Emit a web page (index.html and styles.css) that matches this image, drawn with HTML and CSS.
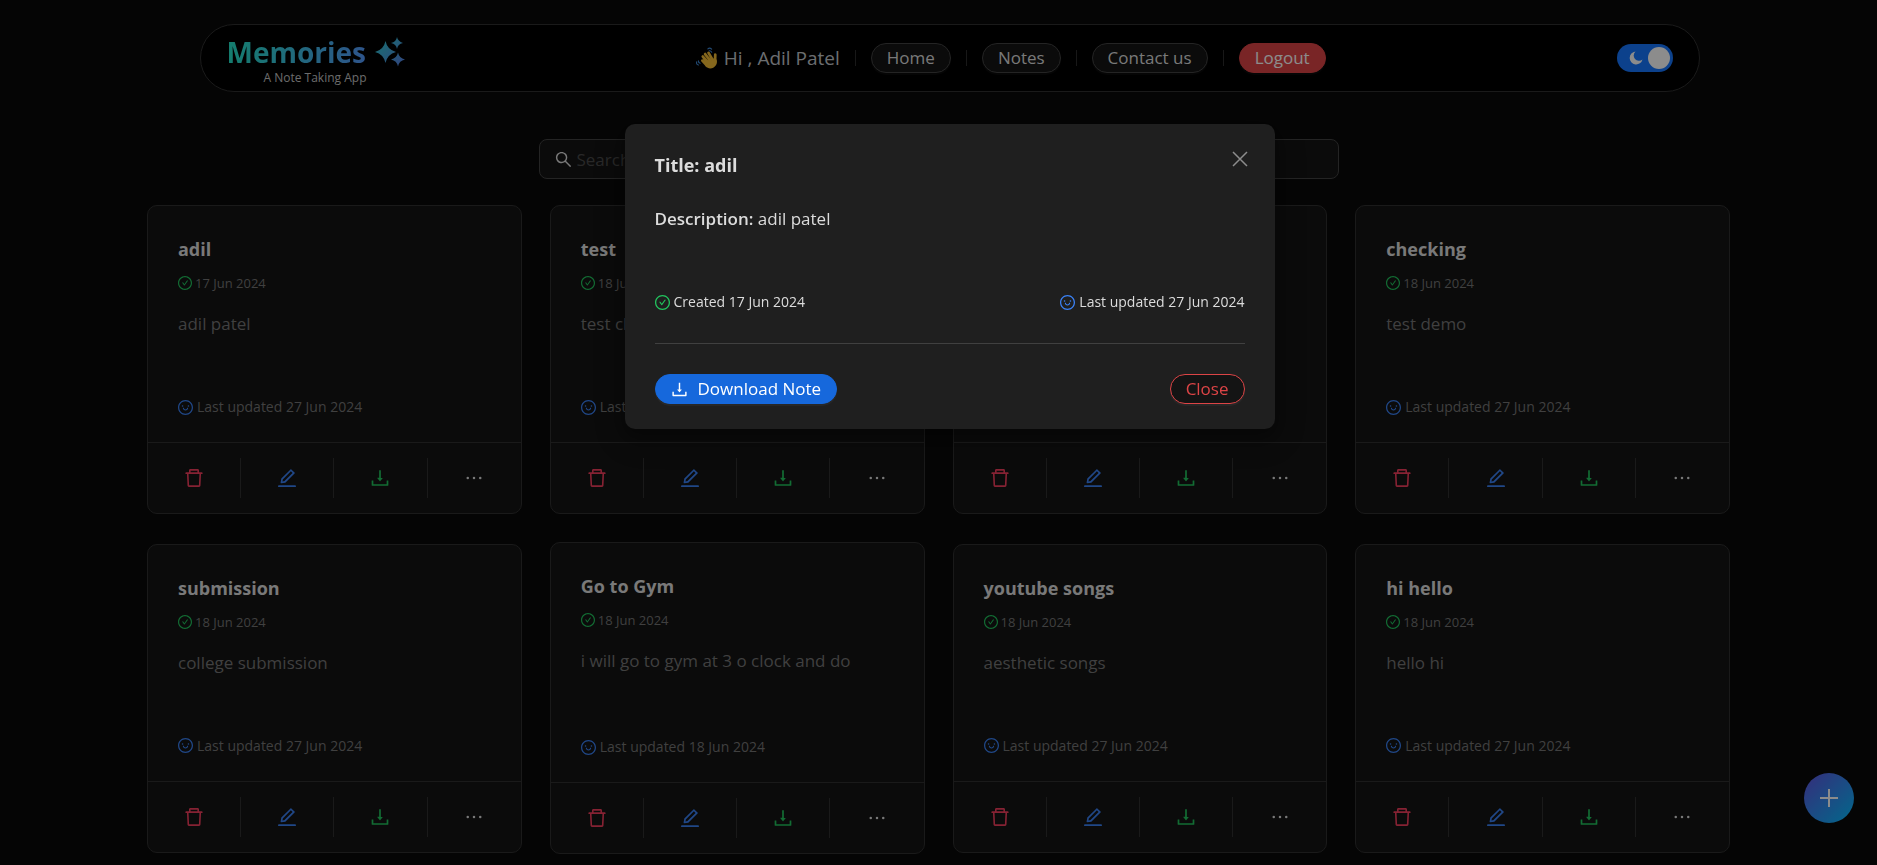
FILE: index.html
```html
<!DOCTYPE html>
<html lang="en">
<head>
<meta charset="utf-8">
<meta name="viewport" content="width=device-width, initial-scale=1">
<title>Memories</title>
<link rel="stylesheet" href="styles.css">
</head>
<body>
<svg class="sprite" aria-hidden="true">
  <defs>
    <linearGradient id="brand" x1="0" y1="0" x2="1" y2="1"><stop offset="0" stop-color="#2bd0cc"/><stop offset="1" stop-color="#5a7be8"/></linearGradient>
  </defs>
  <symbol id="trash" viewBox="64 64 896 896"><path d="M360 184h-8c4.4 0 8-3.6 8-8v8h304v-8c0 4.4 3.6 8 8 8h-8v72h72v-80c0-35.300-28.700-64-64-64H352c-35.300 0-64 28.700-64 64v80h72v-72zm504 72H160c-17.700 0-32 14.300-32 32v32c0 4.400 3.600 8 8 8h60.400l24.700 523c1.600 34.100 29.800 61 63.900 61h454c34.200 0 62.300-26.800 63.900-61l24.700-523H888c4.400 0 8-3.600 8-8v-32c0-17.700-14.300-32-32-32zM731.300 840H292.700l-24.200-512h487l-24.200 512z"/></symbol>
  <symbol id="edit" viewBox="64 64 896 896"><path d="M257.700 752c2 0 4-.2 6-.5L431.900 722c2-.4 3.900-1.300 5.300-2.800l423.900-423.900a9.960 9.960 0 000-14.100L694.900 114.900c-1.900-1.900-4.400-2.900-7.100-2.900s-5.200 1-7.100 2.900L256.800 538.800c-1.500 1.500-2.400 3.300-2.800 5.300l-29.500 168.200a33.500 33.500 0 009.400 29.800c6.600 6.400 14.900 9.900 23.800 9.900zm67.400-174.400L687.800 215l73.300 73.300-362.700 362.600-88.900 15.700 15.600-89zM880 836H144c-17.700 0-32 14.300-32 32v36c0 4.400 3.600 8 8 8h784c4.400 0 8-3.600 8-8v-36c0-17.700-14.300-32-32-32z"/></symbol>
  <symbol id="download" viewBox="64 64 896 896"><path d="M505.700 661a8 8 0 0012.600 0l112-141.700c4.100-5.200.4-12.900-6.300-12.900h-74.100V168c0-4.400-3.600-8-8-8h-60c-4.400 0-8 3.600-8 8v338.300H400c-6.700 0-10.400 7.700-6.300 12.900l112 141.800zM878 626h-60c-4.400 0-8 3.600-8 8v154H214V634c0-4.400-3.600-8-8-8h-60c-4.400 0-8 3.600-8 8v198c0 17.700 14.300 32 32 32h684c17.700 0 32-14.300 32-32V634c0-4.400-3.600-8-8-8z"/></symbol>
  <symbol id="more" viewBox="64 64 896 896"><circle cx="232" cy="511" r="56"/><circle cx="512" cy="511" r="56"/><circle cx="792" cy="511" r="56"/></symbol>
  <symbol id="check" viewBox="64 64 896 896"><path d="M699 353h-46.900c-10.200 0-19.900 4.900-25.900 13.300L469 584.300l-71.200-98.800c-6-8.300-15.600-13.300-25.900-13.300H325c-6.500 0-10.300 7.400-6.500 12.700l124.600 172.800a31.800 31.800 0 0051.700 0l210.600-292c3.900-5.300.1-12.700-6.400-12.700z"/><path d="M512 64C264.600 64 64 264.600 64 512s200.600 448 448 448 448-200.600 448-448S759.400 64 512 64zm0 820c-205.400 0-372-166.600-372-372s166.600-372 372-372 372 166.600 372 372-166.600 372-372 372z"/></symbol>
  <symbol id="smile" viewBox="64 64 896 896"><path d="M288 421a48 48 0 1096 0 48 48 0 10-96 0zm352 0a48 48 0 1096 0 48 48 0 10-96 0zM512 64C264.600 64 64 264.600 64 512s200.600 448 448 448 448-200.600 448-448S759.400 64 512 64zm0 820c-205.400 0-372-166.600-372-372s166.600-372 372-372 372 166.600 372 372-166.600 372-372 372zM664 533h-48.100c-4.200 0-7.800 3.200-8.100 7.400C604 589.900 562.500 629 512 629s-92.100-39.100-95.800-88.600c-.3-4.200-3.900-7.400-8.100-7.400H360a8 8 0 00-8 8.400c4.400 84.300 74.500 151.600 160 151.600s155.600-67.300 160-151.600a8 8 0 00-8-8.400z"/></symbol>
  <symbol id="search" viewBox="64 64 896 896"><path d="M909.600 854.500L649.900 594.800C690.200 542.700 712 479 712 412c0-80.200-31.300-155.400-87.900-212.100-56.600-56.700-132-87.900-212.100-87.900s-155.500 31.300-212.100 87.900C143.200 256.500 112 331.800 112 412c0 80.100 31.300 155.500 87.900 212.100C256.500 680.800 331.800 712 412 712c67 0 130.600-21.800 182.700-62l259.700 259.600a8.200 8.200 0 0011.600 0l43.600-43.500a8.200 8.200 0 000-11.600zM570.400 570.400C528 612.700 471.800 636 412 636s-116-23.300-158.400-65.600C211.300 528 188 471.800 188 412s23.300-116.100 65.600-158.400C296 211.300 352.200 188 412 188s116.100 23.200 158.400 65.600S636 352.200 636 412s-23.300 116.100-65.600 158.400z"/></symbol>
</svg>

<header class="topbar">
  <a class="brand" href="#">
    <span class="brand-row">
      <span class="brand-name">Memories</span>
      <svg class="brand-icon" viewBox="0 0 30 30" aria-hidden="true"><path fill="url(#brand)" d="M10.500 4Q12.300 12.700 21 15Q12.300 17.300 10.500 26Q8.700 17.300 0 15Q8.700 12.700 10.500 4ZM22 0Q22.800 4.200 28 6Q22.800 7.200 22 12Q21.200 7.200 16 6Q21.200 4.800 22 0ZM23 15.500Q24.200 21.300 30 22.500Q24.200 23.700 23 29.500Q21.800 23.700 16 22.500Q21.800 21.300 23 15.500Z"/></svg>
    </span>
    <span class="brand-sub">A Note Taking App</span>
  </a>
  <nav class="menu">
    <span class="greeting">
      <svg class="wave" viewBox="0 0 20 20" aria-hidden="true">
        <g fill="#f2bc35"><path d="M5.500 8.500l4 4 7-2 2.200.9c1 3-.2 5.700-2.600 7.200-2.700 1.700-5.600 1-7.400-1z"/></g>
        <g stroke="#f2bc35" stroke-width="2.500" stroke-linecap="round" fill="none"><path d="M9.500 16.500L5.800 12.400M11.500 14.500L6.200 8.700M13 12.500L8.300 6.400M15 11.500L11.400 5.300M17.300 13.500L17.500 7"/></g>
        <g stroke="#3f8ad8" stroke-width="1" stroke-linecap="round" fill="none"><path d="M10.800 1.800q1.600-1.600 3.400.2M12 3.400q1.500-.2 2.300 1.300M.6 13.500q-.5 2.600 1.700 2.800M2.200 12.500q-.2 1.800 1.600 2.200"/></g>
      </svg>
      Hi , Adil Patel
    </span>
    <i class="bar"></i>
    <a class="pill" href="#">Home</a>
    <i class="bar"></i>
    <a class="pill" href="#">Notes</a>
    <i class="bar"></i>
    <a class="pill" href="#">Contact us</a>
    <i class="bar"></i>
    <button class="pill pill-danger" type="button">Logout</button>
  </nav>
  <label class="switch">
    <input class="switch-input" type="checkbox" role="switch" aria-label="Dark mode" checked>
    <svg class="moon" viewBox="0 0 14 14" aria-hidden="true"><path fill="#fff" d="M6.500.5a6.500 6.500 0 1 0 7 8A5 5 0 0 1 6.500.5z"/></svg>
    <span class="knob"></span>
  </label>
</header>

<main class="page">
  <label class="search">
    <svg class="search-icon" aria-hidden="true"><use href="#search"/></svg>
    <input class="search-input" type="text" placeholder="Search" aria-label="Search notes">
  </label>

  <div class="grid">
    <article class="card">
      <div class="card-body">
        <h2 class="card-title">adil</h2>
        <p class="created"><svg><use href="#check"/></svg>17 Jun 2024</p>
        <p class="text">adil patel</p>
        <p class="updated"><svg><use href="#smile"/></svg>Last updated 27 Jun 2024</p>
      </div>
      <div class="actions">
        <button class="act red" aria-label="Delete"><svg><use href="#trash"/></svg></button>
        <button class="act blue" aria-label="Edit"><svg><use href="#edit"/></svg></button>
        <button class="act green" aria-label="Download"><svg><use href="#download"/></svg></button>
        <button class="act" aria-label="More"><svg><use href="#more"/></svg></button>
      </div>
    </article>
    <article class="card">
      <div class="card-body">
        <h2 class="card-title">test</h2>
        <p class="created"><svg><use href="#check"/></svg>18 Jun 2024</p>
        <p class="text">test checking</p>
        <p class="updated"><svg><use href="#smile"/></svg>Last updated 27 Jun 2024</p>
      </div>
      <div class="actions">
        <button class="act red" aria-label="Delete"><svg><use href="#trash"/></svg></button>
        <button class="act blue" aria-label="Edit"><svg><use href="#edit"/></svg></button>
        <button class="act green" aria-label="Download"><svg><use href="#download"/></svg></button>
        <button class="act" aria-label="More"><svg><use href="#more"/></svg></button>
      </div>
    </article>
    <article class="card">
      <div class="card-body">
        <h2 class="card-title">demo</h2>
        <p class="created"><svg><use href="#check"/></svg>18 Jun 2024</p>
        <p class="text">demo</p>
        <p class="updated"><svg><use href="#smile"/></svg>Last updated 27 Jun 2024</p>
      </div>
      <div class="actions">
        <button class="act red" aria-label="Delete"><svg><use href="#trash"/></svg></button>
        <button class="act blue" aria-label="Edit"><svg><use href="#edit"/></svg></button>
        <button class="act green" aria-label="Download"><svg><use href="#download"/></svg></button>
        <button class="act" aria-label="More"><svg><use href="#more"/></svg></button>
      </div>
    </article>
    <article class="card">
      <div class="card-body">
        <h2 class="card-title">checking</h2>
        <p class="created"><svg><use href="#check"/></svg>18 Jun 2024</p>
        <p class="text">test demo</p>
        <p class="updated"><svg><use href="#smile"/></svg>Last updated 27 Jun 2024</p>
      </div>
      <div class="actions">
        <button class="act red" aria-label="Delete"><svg><use href="#trash"/></svg></button>
        <button class="act blue" aria-label="Edit"><svg><use href="#edit"/></svg></button>
        <button class="act green" aria-label="Download"><svg><use href="#download"/></svg></button>
        <button class="act" aria-label="More"><svg><use href="#more"/></svg></button>
      </div>
    </article>
    <article class="card">
      <div class="card-body">
        <h2 class="card-title">submission</h2>
        <p class="created"><svg><use href="#check"/></svg>18 Jun 2024</p>
        <p class="text">college submission</p>
        <p class="updated"><svg><use href="#smile"/></svg>Last updated 27 Jun 2024</p>
      </div>
      <div class="actions">
        <button class="act red" aria-label="Delete"><svg><use href="#trash"/></svg></button>
        <button class="act blue" aria-label="Edit"><svg><use href="#edit"/></svg></button>
        <button class="act green" aria-label="Download"><svg><use href="#download"/></svg></button>
        <button class="act" aria-label="More"><svg><use href="#more"/></svg></button>
      </div>
    </article>
    <article class="card">
      <div class="card-body">
        <h2 class="card-title">Go to Gym</h2>
        <p class="created"><svg><use href="#check"/></svg>18 Jun 2024</p>
        <p class="text text-long">i will go to gym at 3 o clock and do</p>
        <p class="updated"><svg><use href="#smile"/></svg>Last updated 18 Jun 2024</p>
      </div>
      <div class="actions">
        <button class="act red" aria-label="Delete"><svg><use href="#trash"/></svg></button>
        <button class="act blue" aria-label="Edit"><svg><use href="#edit"/></svg></button>
        <button class="act green" aria-label="Download"><svg><use href="#download"/></svg></button>
        <button class="act" aria-label="More"><svg><use href="#more"/></svg></button>
      </div>
    </article>
    <article class="card">
      <div class="card-body">
        <h2 class="card-title">youtube songs</h2>
        <p class="created"><svg><use href="#check"/></svg>18 Jun 2024</p>
        <p class="text">aesthetic songs</p>
        <p class="updated"><svg><use href="#smile"/></svg>Last updated 27 Jun 2024</p>
      </div>
      <div class="actions">
        <button class="act red" aria-label="Delete"><svg><use href="#trash"/></svg></button>
        <button class="act blue" aria-label="Edit"><svg><use href="#edit"/></svg></button>
        <button class="act green" aria-label="Download"><svg><use href="#download"/></svg></button>
        <button class="act" aria-label="More"><svg><use href="#more"/></svg></button>
      </div>
    </article>
    <article class="card">
      <div class="card-body">
        <h2 class="card-title">hi hello</h2>
        <p class="created"><svg><use href="#check"/></svg>18 Jun 2024</p>
        <p class="text">hello hi</p>
        <p class="updated"><svg><use href="#smile"/></svg>Last updated 27 Jun 2024</p>
      </div>
      <div class="actions">
        <button class="act red" aria-label="Delete"><svg><use href="#trash"/></svg></button>
        <button class="act blue" aria-label="Edit"><svg><use href="#edit"/></svg></button>
        <button class="act green" aria-label="Download"><svg><use href="#download"/></svg></button>
        <button class="act" aria-label="More"><svg><use href="#more"/></svg></button>
      </div>
    </article>
  </div>
</main>

<button class="fab" type="button" aria-label="Add note">
  <svg viewBox="0 0 20 20" width="20" height="20" aria-hidden="true"><path d="M10 1v18M1 10h18" stroke="#fff" stroke-width="2"/></svg>
</button>

<div class="mask">
  <section class="modal" role="dialog" aria-modal="true" aria-labelledby="note-title">
    <div class="modal-head">
      <h2 class="modal-title" id="note-title">Title: adil</h2>
      <button class="modal-x" type="button" aria-label="Dismiss">
        <svg viewBox="0 0 16 16" width="16" height="16" aria-hidden="true"><path d="M1 1l14 14M15 1L1 15" stroke="currentColor" stroke-width="1.500"/></svg>
      </button>
    </div>
    <p class="modal-text"><strong>Description:</strong> adil patel</p>
    <div class="modal-meta">
      <span class="stamp stamp-created"><svg><use href="#check"/></svg>Created 17 Jun 2024</span>
      <span class="stamp stamp-updated"><svg><use href="#smile"/></svg>Last updated 27 Jun 2024</span>
    </div>
    <div class="modal-foot">
      <button class="pill pill-primary" type="button"><svg><use href="#download"/></svg>Download Note</button>
      <button class="pill pill-outline" type="button">Close</button>
    </div>
  </section>
</div>
</body>
</html>
```
FILE: styles.css
```css
:root {
  --text: #dcdcdc;
  --muted: #757575;
  --line: #303030;
  --surface: #141414;
  --green: #22c55e;
  --blue: #3b82f6;
  --rose: #f43f5e;
  --shift: 22px;
}

* { box-sizing: border-box; }

body {
  margin: 0;
  height: 100vh;
  overflow: hidden;
  background: #0a0a0a;
  color: var(--text);
  font-family: "Segoe UI", "Open Sans", "Noto Sans", sans-serif;
  font-size: 16px;
}

h2, p { margin: 0; }
svg { display: block; fill: currentColor; flex: none; }
.sprite { position: absolute; width: 0; height: 0; }
button { font: inherit; color: inherit; cursor: pointer; }

/* Header */
.topbar {
  display: flex;
  align-items: center;
  justify-content: space-between;
  width: 80%;
  max-width: 1500px;
  height: 68px;
  margin: 24px auto 0;
  translate: calc(var(--shift) / 2) 0;
  padding: 0 26px;
  border: 1px solid var(--line);
  border-radius: 34px;
  background: #000;
}

.brand { display: flex; flex-direction: column; padding-top: 4px; text-decoration: none; color: inherit; }
.brand-row { display: flex; align-items: center; gap: 9px; }
.brand-name {
  font-size: 28px;
  font-weight: 700;
  line-height: 36px;
  background: linear-gradient(100deg, #25e6c8, #5599ff);
  -webkit-background-clip: text;
  background-clip: text;
  color: transparent;
}
.brand-icon { width: 30px; height: 30px; }
.brand-sub { margin-left: 37px; font-size: 12px; line-height: 16px; color: #c4c4c4; }

.menu { display: flex; align-items: center; gap: 15px; }
.greeting { display: flex; align-items: center; gap: 6px; font-size: 19px; color: #c4c8cc; }
.wave { width: 22px; height: 22px; }
.bar { width: 1px; height: 16px; background: #2c2c2c; }

.pill {
  display: inline-flex;
  align-items: center;
  height: 30px;
  padding: 0 15px;
  border: 1px solid #424242;
  border-radius: 15px;
  background: var(--surface);
  color: var(--text);
  font-size: 17px;
  line-height: 22px;
  text-decoration: none;
  box-shadow: 0 2px 0 rgba(255, 255, 255, 0.04);
}
.pill-danger { border-color: #dc4446; background: #dc4446; color: #fff; }

.switch {
  position: relative;
  display: flex;
  align-items: center;
  justify-content: space-between;
  width: 56px;
  height: 28px;
  padding: 0 3px 0 12px;
  border-radius: 14px;
  background: #1677ff;
}
.switch-input { position: absolute; inset: 0; margin: 0; opacity: 0; }
.moon { width: 14px; height: 14px; }
.knob { width: 22px; height: 22px; border-radius: 50%; background: #fff; }

/* Notes */
.page { display: flex; flex-direction: column; align-items: center; padding: 47px 147px 12px; }

.search {
  display: flex;
  align-items: center;
  gap: 5px;
  width: 100%;
  max-width: 800px;
  height: 40px;
  padding: 0 15px;
  border: 1px solid #424242;
  border-radius: 8px;
  background: var(--surface);
}
.search-icon { width: 17px; height: 17px; }
.search-input {
  flex: 1;
  min-width: 0;
  padding: 0;
  border: 0;
  outline: 0;
  background: none;
  color: var(--text);
  font: inherit;
  font-size: 17px;
}
.search-input::placeholder { color: #4a4a4a; opacity: 1; }

.grid {
  display: grid;
  grid-template-columns: repeat(4, minmax(0, 1fr));
  align-items: center;
  gap: 28px;
  width: 100%;
  margin-top: 26px;
}

.card { border: 1px solid var(--line); border-radius: 10px; background: var(--surface); }
.card-body { padding: 30px 30px 23px; }
.card-title { font-size: 18px; font-weight: 700; line-height: 26px; }
.created, .updated { display: flex; align-items: center; color: var(--muted); }
.created { gap: 3px; margin-top: 10px; font-size: 13px; line-height: 22px; }
.created svg { width: 14px; height: 14px; color: var(--green); }
.text { height: 68px; margin-top: 17px; font-size: 17px; line-height: 26px; color: var(--muted); }
.text-long { height: 71px; }
.updated { gap: 4px; margin-top: 16px; font-size: 14px; line-height: 24px; }
.updated svg { width: 15px; height: 15px; color: var(--blue); }

.actions { display: grid; grid-template-columns: repeat(4, 1fr); padding: 15px 0; border-top: 1px solid var(--line); }
.act {
  display: flex;
  align-items: center;
  justify-content: center;
  height: 40px;
  padding: 0;
  border: 0;
  border-right: 1px solid var(--line);
  background: none;
  color: var(--text);
}
.act:last-child { border-right: 0; }
.act svg { width: 20px; height: 20px; }
.act.red { color: var(--rose); }
.act.blue { color: var(--blue); }
.act.green { color: var(--green); }

.fab {
  position: fixed;
  right: 23px;
  bottom: 42px;
  display: flex;
  align-items: center;
  justify-content: center;
  width: 50px;
  height: 50px;
  padding: 0;
  border: 0;
  border-radius: 50%;
  background: linear-gradient(135deg, #6253e1, #04befe);
}

/* Dialog */
.mask {
  position: fixed;
  inset: 0;
  display: flex;
  align-items: flex-start;
  justify-content: center;
  padding: 124px 0 0 var(--shift);
  background: rgba(0, 0, 0, 0.45);
}
.modal {
  width: 650px;
  padding: 25px 30px;
  border-radius: 10px;
  background: #1f1f1f;
  box-shadow: 0 6px 16px rgba(0, 0, 0, 0.3), 0 9px 28px 8px rgba(0, 0, 0, 0.2);
}
.modal-head { display: flex; align-items: flex-start; justify-content: space-between; }
.modal-title { padding-top: 3px; font-size: 18px; font-weight: 700; line-height: 26px; }
.modal-x { display: flex; margin: 2px -3px 0 0; padding: 0; border: 0; background: none; color: #8c8c8c; }
.modal-text { margin-top: 28px; font-size: 17px; line-height: 26px; }
.modal-text strong { font-weight: 600; }
.modal-meta { display: flex; justify-content: space-between; margin-top: 58px; padding-bottom: 29px; border-bottom: 1px solid #404040; }
.stamp { display: flex; align-items: center; gap: 4px; font-size: 14px; line-height: 24px; }
.stamp svg { width: 15px; height: 15px; }
.stamp-created svg { color: var(--green); }
.stamp-updated svg { color: var(--blue); }
.modal-foot { display: flex; justify-content: space-between; margin-top: 30px; }
.pill-primary { gap: 10px; border-color: #1668dc; background: #1668dc; color: #fff; }
.pill-primary svg { width: 17px; height: 17px; }
.pill-outline { border-color: #dc4446; color: #dc4446; }
```
